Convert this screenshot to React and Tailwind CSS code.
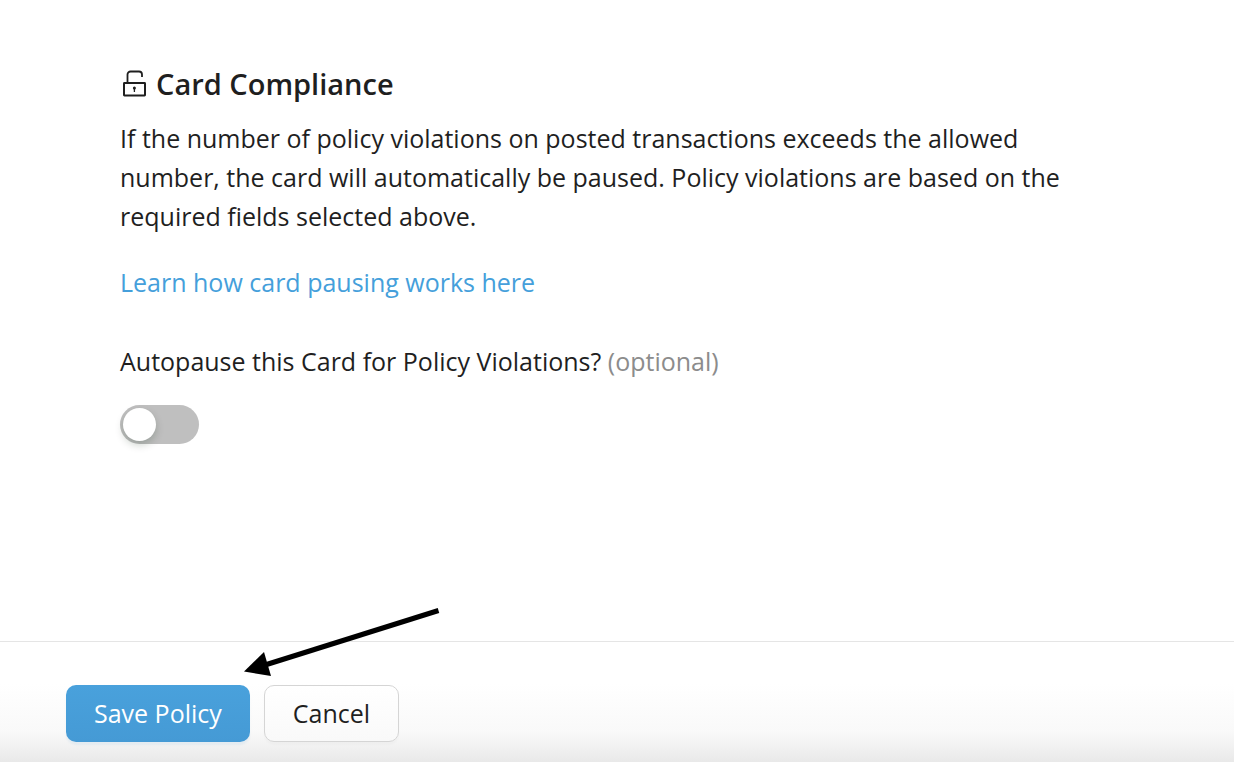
import React, { useState } from "react";

const LockIcon = ({ className }) => (
  <svg viewBox="0 0 28 27" fill="none" stroke="currentColor" strokeWidth="2" className={className} aria-hidden="true">
    <rect x="4" y="13" width="21" height="12.5" rx="0.4" />
    <path d="M7.5 13V4.5a3 3 0 0 1 3-3h8.500a3 3 0 0 1 3 3V7" strokeWidth="1.800" />
    <circle cx="14.400" cy="18" r="1.500" fill="currentColor" stroke="none" />
    <path d="M14.400 18v4" strokeWidth="1.300" />
  </svg>
);

const Toggle = ({ id, checked, onChange }) => (
  <label
    htmlFor={id}
    className="flex w-[79px] h-[39px] p-[3px] rounded-full bg-[#bfbfbf] has-checked:bg-[#459fdb] cursor-pointer"
  >
    <input
      id={id}
      type="checkbox"
      role="switch"
      checked={checked}
      onChange={(e) => onChange(e.target.checked)}
      className="appearance-none size-[33px] rounded-full bg-white shadow-[0_4px_8px_rgba(0,35,11,0.2)] checked:ml-auto cursor-pointer"
    />
  </label>
);

const Arrow = ({ className }) => (
  <svg viewBox="0 0 200 72" className={className} aria-hidden="true">
    <path d="M193.500 4.500L20 59" stroke="#000" strokeWidth="5" />
    <path d="M-1 65.500L19 46L26 70Z" fill="#000" />
  </svg>
);

const App = () => {
  const [autopause, setAutopause] = useState(false);

  return (
    <div className="flex flex-col min-h-screen bg-white text-[#1f1f1f] text-[25px] leading-[39px] font-['Open_Sans',sans-serif]">
      <main className="grow px-[120px] pt-16">
        <h2 className="flex items-center gap-2 text-[29px] font-semibold">
          <LockIcon className="w-7 h-[27px]" />
          Card Compliance
        </h2>
        <p className="mt-4 max-w-[960px]">
          If the number of policy violations on posted transactions exceeds the allowed number, the
          card will automatically be paused. Policy violations are based on the required fields
          selected above.
        </p>
        <a href="#card-pausing" className="block mt-[27px] text-[#459fdb]">
          Learn how card pausing works here
        </a>
        <label htmlFor="autopause" className="block mt-10 mb-6">
          Autopause this Card for Policy Violations? <span className="text-[#8c8c8c]">(optional)</span>
        </label>
        <Toggle id="autopause" checked={autopause} onChange={setAutopause} />
      </main>
      <footer className="relative flex gap-[14px] px-[66px] pt-[43px] pb-5 border-t border-[#e5e5e5] bg-linear-to-b from-white from-35% via-[#f9f9f9] via-75% to-[#e9e9e9]">
        <Arrow className="absolute left-[245px] -top-9 w-[200px] h-[72px] overflow-visible" />
        <button className="h-[57px] px-7 rounded-[10px] bg-linear-to-b from-[#49a1dc] to-[#459ad5] text-white shadow-[0_3px_2px_rgba(69,159,219,0.08)] cursor-pointer">
          Save Policy
        </button>
        <button className="h-[57px] px-7 rounded-[10px] border border-[#d5d5d5] bg-linear-to-b from-white to-[#f9f9f9] shadow-[0_3px_2px_rgba(0,0,0,0.02)] cursor-pointer">
          Cancel
        </button>
      </footer>
    </div>
  );
};

export default App;
